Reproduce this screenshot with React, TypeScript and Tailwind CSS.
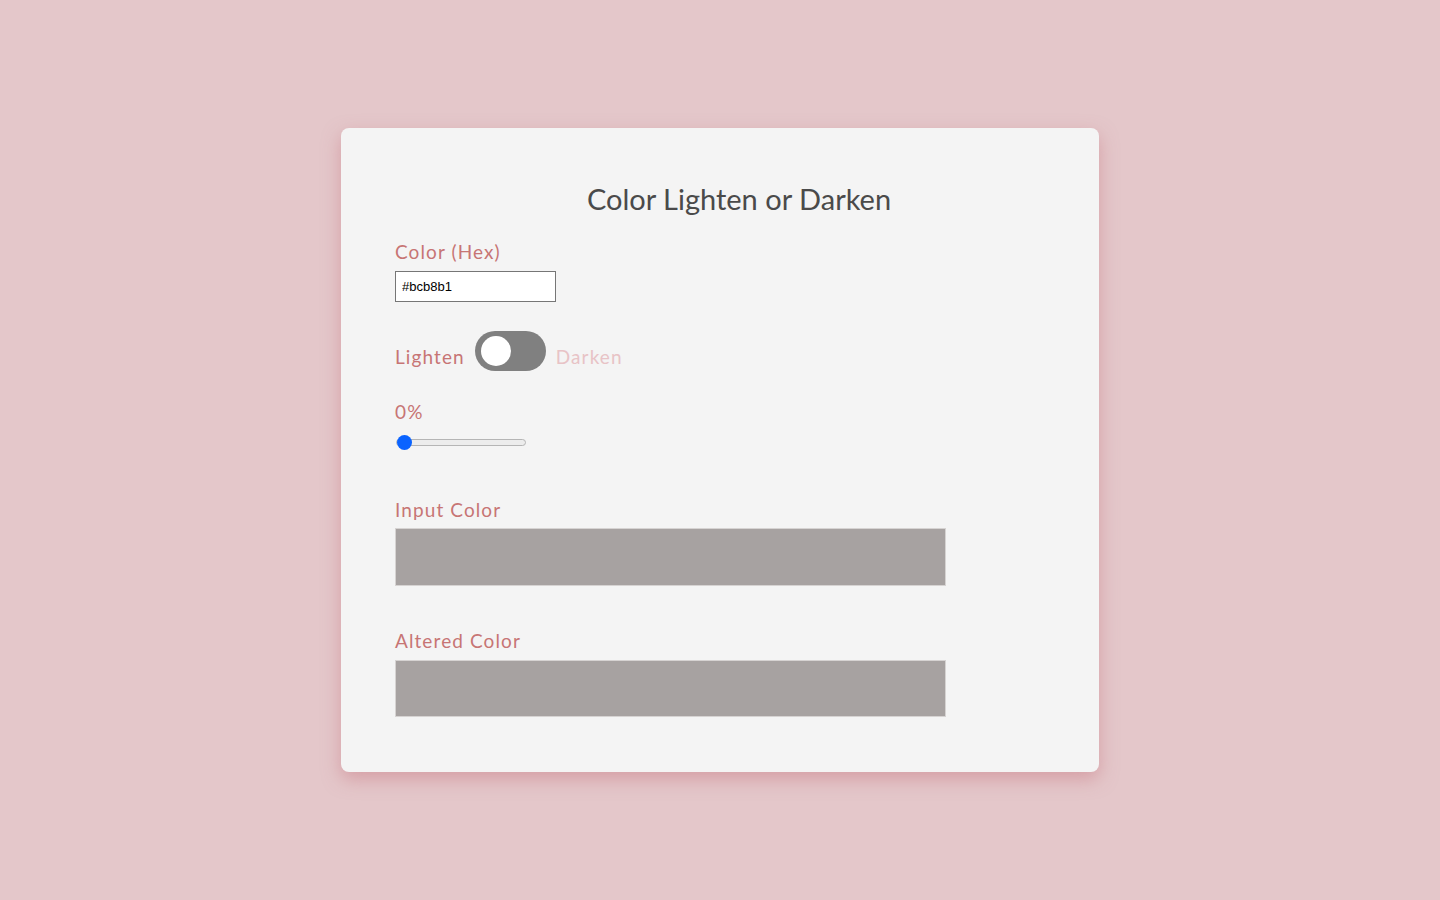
import { useState } from "react";

export default function App() {
  const [hex, setHex] = useState("#bcb8b1");
  const [darken, setDarken] = useState(false);
  const [amount, setAmount] = useState(0);

  return (
    <div className="flex min-h-screen items-start justify-center bg-[#e4c7ca] pt-[128px] font-['Lato',sans-serif]">
      <div className="w-[758px] rounded-lg bg-[#f4f4f4] px-[54px] pt-[54px] pb-[55px] shadow-[0_7px_18px_rgba(200,120,130,0.5)]">
        <h1 className="pl-[38px] text-center text-[29px] leading-[34px] text-[#4a4a4a]">
          Color Lighten or Darken
        </h1>

        <label className="mt-[24px] block text-[19px] leading-[24px] tracking-[1.1px] text-[#c77574]">
          Color (Hex)
        </label>
        <input
          type="text"
          value={hex}
          onChange={(e) => setHex(e.target.value)}
          className="mt-[7px] block h-[31px] w-[161px] border border-[#767676] bg-white px-[6px] font-['Liberation_Sans',sans-serif] text-[13px] text-black outline-none"
        />

        <div className="mt-[29px] flex items-end gap-[10px]">
          <span className={`pb-[2px] text-[19px] leading-[24px] tracking-[1.1px] ${darken ? "text-[#e8c3c6]" : "text-[#c77574]"}`}>
            Lighten
          </span>
          <button
            onClick={() => setDarken(!darken)}
            className="flex h-[40px] w-[71px] items-center rounded-full bg-[#808080] px-[6px]"
          >
            <span
              className={`block h-[30px] w-[30px] rounded-full bg-white transition ${darken ? "translate-x-[29px]" : ""}`}
            />
          </button>
          <span className={`pb-[2px] text-[19px] leading-[24px] tracking-[1.1px] ${darken ? "text-[#c77574]" : "text-[#e8c3c6]"}`}>
            Darken
          </span>
        </div>

        <p className="mt-[29px] text-[19px] leading-[24px] tracking-[1.1px] text-[#c77574]">
          {amount}%
        </p>
        <input
          type="range"
          min={0}
          max={100}
          value={amount}
          onChange={(e) => setAmount(Number(e.target.value))}
          className="mt-[11px] ml-[1px] block h-[14px] w-[130px] cursor-pointer appearance-none bg-transparent [&::-webkit-slider-runnable-track]:h-[7px] [&::-webkit-slider-runnable-track]:rounded-full [&::-webkit-slider-runnable-track]:border [&::-webkit-slider-runnable-track]:border-[#b5b5b5] [&::-webkit-slider-runnable-track]:bg-[#ececec] [&::-webkit-slider-thumb]:mt-[-5px] [&::-webkit-slider-thumb]:h-[15px] [&::-webkit-slider-thumb]:w-[15px] [&::-webkit-slider-thumb]:appearance-none [&::-webkit-slider-thumb]:rounded-full [&::-webkit-slider-thumb]:bg-[#0a63ff]"
        />

        <p className="mt-[49px] text-[19px] leading-[24px] tracking-[1.1px] text-[#c77574]">
          Input Color
        </p>
        <div className="mt-[6px] h-[58px] w-[551px] border border-[#d6d3d2] bg-[#a7a2a1]" />

        <p className="mt-[43px] text-[19px] leading-[24px] tracking-[1.1px] text-[#c77574]">
          Altered Color
        </p>
        <div className="mt-[7px] h-[57px] w-[551px] border border-[#d6d3d2] bg-[#a7a2a1]" />
      </div>
    </div>
  );
}
